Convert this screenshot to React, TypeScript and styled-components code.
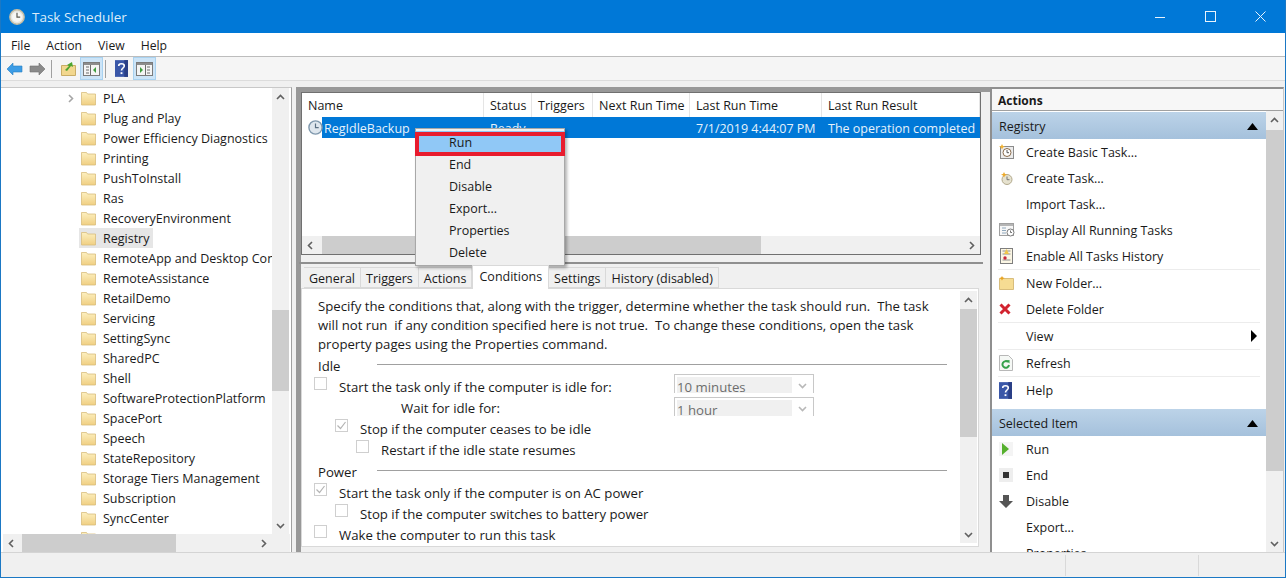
import * as React from 'react'
import styled, { createGlobalStyle } from 'styled-components'

const GlobalStyle = createGlobalStyle`
  html, body {
    margin: 0;
    padding: 0;
    height: 100%;
    overflow: hidden;
    background: #f0f0f0;
  }
  * { box-sizing: border-box; }
`

const Window = styled.div`
  position: relative;
  width: 1286px;
  height: 578px;
  display: flex;
  flex-direction: column;
  background: #f0f0f0;
  border-left: 1px solid #1b78c4;
  border-right: 1px solid #1b78c4;
  border-bottom: 1px solid #1b78c4;
  font-family: "Open Sans", "Noto Sans", sans-serif;
  font-size: 12.5px;
  color: #1a1a1a;
  overflow: hidden;
`

const TitleBar = styled.div`
  height: 33px;
  margin: 0 -1px;
  flex: none;
  background: #0078d7;
  display: flex;
  align-items: center;
  padding: 0 1px 0 9px;
  gap: 7px;
  color: #dcecf9;
  font-size: 13.5px;
`

const TitleText = styled.span`
  flex: 1;
`

const WindowButton = styled.div`
  width: 50px;
  height: 32px;
  margin-left: -7px;
  display: flex;
  align-items: center;
  justify-content: center;
`

const MenuBar = styled.div`
  height: 24px;
  flex: none;
  background: #fff;
  border-bottom: 1px solid #bdbdbd;
  display: flex;
  align-items: center;
  padding: 2px 0 0 10px;
  gap: 16px;
  font-size: 12.2px;
`

const Toolbar = styled.div`
  height: 24px;
  flex: none;
  background: #f5f5f5;
  border-bottom: 1px solid #dcdcdc;
  display: flex;
  align-items: center;
  padding-left: 2px;
`

const ToolButton = styled.div<{ $on?: boolean }>`
  width: 23px;
  height: 23px;
  display: flex;
  align-items: center;
  justify-content: center;
  background: ${p => (p.$on ? '#cce4f7' : 'transparent')};
  border: 1px solid ${p => (p.$on ? '#a9d2f0' : 'transparent')};
`

const ToolSeparator = styled.div`
  width: 1px;
  height: 18px;
  background: #a0a0a0;
  margin: 0 4.5px 0 2px;
`

const Main = styled.div`
  flex: 1;
  min-height: 0;
  display: flex;
  padding: 6px 2px 0 0;
`

const Pane = styled.div`
  display: flex;
  flex-direction: column;
  background: #fff;
  border: 1px solid #a0a0a0;
  overflow: hidden;
`

const TreePane = styled(Pane)`
  width: 291px;
  height: 466px;
  flex: none;
  padding-left: 2px;
  border-left: none;
  border-top: 1px solid #c8c8c8;
`

const ScrollRow = styled.div`
  flex: 1;
  min-height: 0;
  display: flex;
`

const TreeScrollRow = styled(ScrollRow)`
  padding-right: 2px;
`

const TreeList = styled.div`
  flex: 1;
  min-width: 0;
  overflow: hidden;
`

const TreeRow = styled.div`
  height: 20px;
  display: flex;
  align-items: center;
  white-space: nowrap;
  overflow: hidden;
  padding-left: 62px;
`

const TreeArrow = styled.div`
  width: 16px;
  flex: none;
  display: flex;
  align-items: center;
`

const FolderBox = styled.div<{ $selected?: boolean }>`
  height: 20px;
  display: flex;
  align-items: center;
  gap: 7px;
  padding-right: 4px;
  margin-left: -2px;
  padding-left: 2px;
  background: ${p => (p.$selected ? '#e6e6e6' : 'transparent')};
`

const ScrollFooter = styled.div`
  height: 18px;
  flex: none;
  display: flex;
  background: #f0f0f0;
`

const TreeFooter = styled(ScrollFooter)`
  margin-right: 1px;
`

const TreeCorner = styled.div`
  width: 18px;
  flex: none;
`

const Track = styled.div<{ $vertical?: boolean }>`
  flex: ${p => (p.$vertical ? 'none' : '1')};
  min-width: 0;
  display: flex;
  flex-direction: ${p => (p.$vertical ? 'column' : 'row')};
  background: #f0f0f0;
  ${p => (p.$vertical ? 'width: 17px;' : '')}
`

const TrackButton = styled.div`
  width: 17px;
  height: 18px;
  flex: none;
  display: flex;
  align-items: center;
  justify-content: center;
`

const TrackGap = styled.div<{ $size: number }>`
  flex: 0 0 ${p => p.$size}px;
`

const Thumb = styled.div<{ $size: number }>`
  flex: 0 0 ${p => p.$size}px;
  background: #cdcdcd;
`

const TrackFill = styled.div`
  flex: 1;
`

const CenterColumn = styled.div`
  width: 694px;
  margin-left: 4px;
  flex: none;
  height: 466px;
  display: flex;
  flex-direction: column;
  border-left: 5px solid #989898;
  border-top: 5px solid #989898;
`

const TaskPane = styled(Pane)`
  width: 680px;
  height: 163px;
  flex: none;
  border: 1px solid #707070;
`

const TaskHeader = styled.div`
  height: 24px;
  flex: none;
  display: flex;
  background: #fff;
`

const HeaderCell = styled.div<{ $width: number }>`
  width: ${p => p.$width}px;
  flex: none;
  display: flex;
  align-items: center;
  padding-left: 6px;
  border-right: 1px solid #e5e5e5;
  overflow: hidden;
  white-space: nowrap;
`

const TaskBody = styled.div`
  flex: 1;
  min-height: 0;
  overflow: hidden;
`

const TaskRow = styled.div`
  height: 21px;
  display: flex;
  background: #0078d7;
  color: #e6f2fb;
  margin-left: 20px;
`

const TaskCell = styled.div<{ $width: number; $pad?: number }>`
  width: ${p => p.$width}px;
  flex: none;
  display: flex;
  align-items: center;
  padding: 1px 0 0 ${p => p.$pad ?? 6}px;
  overflow: hidden;
  white-space: nowrap;
`

const TaskClock = styled.div`
  position: absolute;
  left: 307px;
  top: 120px;
  width: 15px;
  height: 15px;
`

const Splitter = styled.div`
  height: 9px;
  flex: none;
  margin-left: -2px;
  margin-right: 7px;
  border-bottom: 2px solid #8f8f8f;
`

const TabStrip = styled.div`
  height: 24px;
  flex: none;
  display: flex;
  align-items: flex-end;
  padding-left: 3px;
`

const Tab = styled.div<{ $active?: boolean }>`
  height: ${p => (p.$active ? 24 : 21)}px;
  padding: ${p => (p.$active ? '0 6px 2px' : '1px 5px 0')};
  margin-bottom: ${p => (p.$active ? -1 : 0)}px;
  display: flex;
  align-items: center;
  background: ${p => (p.$active ? '#fff' : '#f0f0f0')};
  border: 1px solid #d9d9d9;
  border-bottom: ${p => (p.$active ? 'none' : '1px solid #d9d9d9')};
  border-left: ${p => (p.$active ? '1px solid #d9d9d9' : 'none')};
  position: relative;
  z-index: ${p => (p.$active ? 1 : 0)};
`

const ConditionsPane = styled.div`
  width: 678px;
  flex: 1;
  min-height: 0;
  display: flex;
  background: #fff;
  border: 1px solid #d9d9d9;
  padding: 2px 1px 3px 0;
  margin-bottom: 6px;
  font-size: 13.2px;
`

const ConditionsBody = styled.div`
  flex: 1;
  min-width: 0;
  overflow: hidden;
  padding: 6px 0 0 16px;
`

const Intro = styled.p`
  margin: 0 0 1px;
  line-height: 19px;
  white-space: pre;
`

const GroupHeading = styled.div`
  height: 21px;
  display: flex;
  align-items: center;
  margin-top: 1px;
  width: 629px;
`

const GroupLabel = styled.span`
  width: 59px;
  flex: none;
`

const GroupRule = styled.div`
  flex: 1;
  height: 1px;
  margin-top: -2px;
  background: #a0a0a0;
`

const OptionRow = styled.div<{ $indent: number }>`
  height: 21px;
  display: flex;
  align-items: center;
  padding-left: ${p => p.$indent}px;
  margin-left: -4px;
  gap: 12px;
  white-space: nowrap;
`

const Checkbox = styled.div`
  width: 13px;
  height: 13px;
  flex: none;
  margin-top: -6px;
  border: 1px solid #cfcfcf;
  display: flex;
  align-items: center;
  justify-content: center;
`

const OptionLabel = styled.span<{ $width?: number }>`
  ${p => (p.$width ? `width: ${p.$width}px; flex: none;` : '')}
`

const Combo = styled.div<{ $lift: number }>`
  width: 140px;
  height: 19px;
  flex: none;
  align-self: flex-start;
  margin-top: ${p => -p.$lift}px;
  border: 1px solid #c8c8c8;
  border-bottom: none;
  display: flex;
  padding: 2px 0 0 2px;
  color: #6d6d6d;
`

const ComboValue = styled.div`
  width: 115px;
  background: #f0f0f0;
  display: flex;
  align-items: center;
  padding-top: 3px;
  overflow: hidden;
`

const ComboArrow = styled.div`
  flex: 1;
  display: flex;
  align-items: center;
  justify-content: center;
`

const ActionsColumn = styled(Pane)`
  width: 294px;
  flex: none;
  height: 466px;
  border-color: #8f8f8f;
  border-width: 2px 0 1px 2px;
  border-right: 1px solid #c8c8c8;
`

const ActionsTitle = styled.div`
  height: 22px;
  flex: none;
  background: #f7f7f7;
  border-bottom: 1px solid #a0a0a0;
  display: flex;
  align-items: center;
  padding: 2px 0 0 6px;
  font-weight: 700;
  font-size: 12px;
`

const ActionsList = styled.div`
  flex: 1;
  min-width: 0;
  overflow: hidden;
  padding-top: 1px;
`

const SectionHead = styled.div`
  height: 27px;
  background: linear-gradient(#bcd3e8, #a5c1dc);
  display: flex;
  align-items: center;
  justify-content: space-between;
  padding: 1px 8px 0 7px;
`

const ActionRow = styled.div`
  height: 26px;
  display: flex;
  align-items: center;
  position: relative;
`

const ActionIcon = styled.div`
  width: 34px;
  flex: none;
  padding-left: 7px;
  display: flex;
  align-items: center;
`

const ActionRule = styled.div`
  height: 1px;
  margin: 0 6px;
  background: #ececec;
`

const ActionGap = styled.div`
  height: 6px;
`

const SubArrow = styled.div`
  position: absolute;
  right: 9px;
  top: 7px;
  width: 0;
  height: 0;
  border-left: 6px solid #000;
  border-top: 6px solid transparent;
  border-bottom: 6px solid transparent;
`

const StatusBar = styled.div`
  height: 25px;
  flex: none;
  display: flex;
  justify-content: flex-end;
  border-top: 1px solid #d4d4d4;
  padding: 2px 2px 1px 0;
`

const StatusCell = styled.div<{ $width: number }>`
  width: ${p => p.$width}px;
  border-left: 1px solid #d9d9d9;
`

const ContextMenu = styled.div`
  position: absolute;
  left: 414px;
  top: 128px;
  width: 150px;
  height: 138px;
  background: #f0f0f0;
  border: 1px solid #a8a8a8;
  box-shadow: 2px 2px 3px rgba(0, 0, 0, 0.3);
  padding: 2px 0;
`

const ContextItem = styled.div<{ $active?: boolean }>`
  height: 22px;
  display: flex;
  align-items: center;
  padding-left: 33px;
  background: ${p => (p.$active ? '#90c8f6' : 'transparent')};
`

const RunHighlight = styled.div`
  position: absolute;
  left: 414px;
  top: 132px;
  width: 150px;
  height: 24px;
  border: 4px solid #e81c2e;
`

const Chevron: React.FC<{ dir: 'up' | 'down' | 'left' | 'right'; color?: string }> = ({ dir, color = '#606060' }) => {
  const points = {
    up: '2,7 5.5,3.5 9,7',
    down: '2,4 5.5,7.5 9,4',
    left: '7,2 3.5,5.5 7,9',
    right: '4,2 7.5,5.5 4,9',
  }[dir]
  return (
    <svg width="11" height="11" viewBox="0 0 11 11">
      <polyline points={points} fill="none" stroke={color} strokeWidth="1.6" />
    </svg>
  )
}

const FolderIcon: React.FC = () => (
  <svg width="15" height="15" viewBox="0 0 15 15">
    <defs>
      <linearGradient id="fold" x1="0" y1="0" x2="0" y2="1">
        <stop offset="0" stopColor="#fdf0c0" />
        <stop offset="1" stopColor="#f0cf82" />
      </linearGradient>
    </defs>
    <path d="M0.5 1.5h5l1 1.5h8v11h-14z" fill="url(#fold)" stroke="#d8bd7c" strokeWidth="0.8" />
  </svg>
)

const ClockIcon: React.FC<{ size?: number }> = ({ size = 15 }) => (
  <svg width={size} height={size} viewBox="0 0 15 15">
    <circle cx="7.5" cy="7.5" r="6.6" fill="#dfe7ee" stroke="#7f98ad" strokeWidth="1.4" />
    <path d="M7.5 3.5v4.2h3.2" fill="none" stroke="#5b7184" strokeWidth="1.2" />
  </svg>
)

const AppClockIcon: React.FC = () => (
  <svg width="16" height="16" viewBox="0 0 16 16">
    <circle cx="8" cy="8" r="7.2" fill="#e6e6e0" stroke="#c6bda2" strokeWidth="1.4" />
    <circle cx="8" cy="8" r="5" fill="#f7f7f4" />
    <path d="M8 3.8v4.4h3.2" fill="none" stroke="#5a5a52" strokeWidth="1.2" />
  </svg>
)

const PanelIcon: React.FC<{ flip?: boolean }> = ({ flip }) => (
  <svg width="17" height="14" viewBox="0 0 17 14">
    <rect x="0.5" y="0.5" width="16" height="13" fill="#f4f4f4" stroke="#7b7b7b" />
    <rect x="1" y="1" width="15" height="2" fill="#8c8c8c" />
    <path d={flip ? 'M11 5h3M11 8h3M11 11h3M9.5 3v10' : 'M3 5h3M3 8h3M3 11h3M7.5 3v10'} stroke="#6d6d6d" />
    <path d={flip ? 'M4 5l3 3-3 3z' : 'M13 5l-3 3 3 3z'} fill="#3e9d3e" />
  </svg>
)

const HelpIcon: React.FC<{ size?: number }> = ({ size = 14 }) => (
  <svg width={size} height={size + 4} viewBox="0 0 14 18">
    <rect width="14" height="18" fill="#3a57a8" />
    <rect x="10" width="4" height="18" fill="#2a3f86" />
    <path d="M4 6.2C4 3.2 10 3.2 10 6.2c0 2.2-3 2.4-3 5" fill="none" stroke="#fff" strokeWidth="1.7" />
    <rect x="6" y="13" width="2" height="2" fill="#fff" />
  </svg>
)

const ACTION_ICONS: Record<string, React.ReactNode> = {
  basic: (
    <svg width="16" height="16" viewBox="0 0 16 16">
      <rect x="1.5" y="2.5" width="13" height="12" fill="#ececec" stroke="#8b8b8b" />
      <circle cx="8" cy="8.5" r="4" fill="#fff" stroke="#8a6b4a" />
      <path d="M8 6v2.7h2" fill="none" stroke="#555" />
      <path d="M3 0l1 2 2 .5-2 1-1 2-1-2-2-1 2-.5z" fill="#f2b233" />
    </svg>
  ),
  create: (
    <svg width="16" height="16" viewBox="0 0 16 16">
      <circle cx="8" cy="9.5" r="5" fill="#e6e2cf" stroke="#b2a98c" />
      <path d="M8 6.5v3.2h2.5" fill="none" stroke="#777" />
      <path d="M5 2l1 2 2 .5-2 1-1 2-1-2-2-1 2-.5z" fill="#eda92a" />
    </svg>
  ),
  running: (
    <svg width="16" height="14" viewBox="0 0 16 14">
      <rect x="0.5" y="0.5" width="14" height="12" fill="#f7f7f7" stroke="#a0a0a0" />
      <rect x="1" y="1" width="13" height="2" fill="#b5b5b5" />
      <path d="M3 5h4M3 7.5h4M3 10h4" stroke="#90a8bc" />
      <circle cx="11.5" cy="9.5" r="3.5" fill="#fff" stroke="#7c7c7c" />
      <path d="M11.5 7.5v2h1.5" fill="none" stroke="#555" strokeWidth="0.8" />
    </svg>
  ),
  history: (
    <svg width="15" height="16" viewBox="0 0 15 16">
      <rect x="1.5" y="0.5" width="12" height="15" fill="#fbf6e4" stroke="#7e7e7e" />
      <path d="M3.5 3h8M3.5 6h8M3.5 12h8" stroke="#909090" />
      <path d="M7.5 1l2.5 5h-5z" fill="#f0c64a" />
      <circle cx="6" cy="10" r="1.7" fill="#c8283c" />
    </svg>
  ),
  folder: (
    <svg width="15" height="14" viewBox="0 0 15 14">
      <path d="M0.5 2.5h14v11h-14z" fill="#f6dc93" stroke="#d8bd7c" />
      <path d="M3 0l.9 1.6 1.8.4-1.8.9-.9 1.6-.9-1.6L.3 2l1.8-.4z" fill="#e9a21f" />
    </svg>
  ),
  del: (
    <svg width="12" height="12" viewBox="0 0 12 12">
      <path d="M1.5 1.5l9 9M10.5 1.5l-9 9" stroke="#d2232f" strokeWidth="3" />
    </svg>
  ),
  refresh: (
    <svg width="14" height="16" viewBox="0 0 14 16">
      <path d="M0.5 0.5h9l4 4v11h-13z" fill="#f5f8f5" stroke="#b8b8b8" />
      <path d="M10 10a3.3 3.3 0 1 1-1-3" fill="none" stroke="#35a24b" strokeWidth="2" />
      <path d="M7 5.5l3.5-.5v3.5z" fill="#35a24b" />
    </svg>
  ),
  help: <HelpIcon size={13} />,
  run: (
    <svg width="14" height="14" viewBox="0 0 14 14">
      <rect width="14" height="14" fill="#f4f4f4" />
      <path d="M3 1l7 6-7 6z" fill="#56b02e" />
    </svg>
  ),
  end: (
    <svg width="14" height="14" viewBox="0 0 14 14">
      <rect width="14" height="14" fill="#eeeeee" />
      <rect x="4" y="4" width="6" height="6" fill="#333" />
    </svg>
  ),
  disable: (
    <svg width="14" height="14" viewBox="0 0 14 14">
      <path d="M4 1h6v6h4l-7 7-7-7h4z" fill="#555" />
    </svg>
  ),
}

const TREE = [
  'PLA', 'Plug and Play', 'Power Efficiency Diagnostics', 'Printing', 'PushToInstall', 'Ras',
  'RecoveryEnvironment', 'Registry', 'RemoteApp and Desktop Connections', 'RemoteAssistance',
  'RetailDemo', 'Servicing', 'SettingSync', 'SharedPC', 'Shell', 'SoftwareProtectionPlatform',
  'SpacePort', 'Speech', 'StateRepository', 'Storage Tiers Management', 'Subscription', 'SyncCenter',
  'Sysmain',
]

const COLUMNS: [string, number][] = [
  ['Name', 182], ['Status', 48], ['Triggers', 61], ['Next Run Time', 97],
  ['Last Run Time', 132], ['Last Run Result', 158],
]

const TABS = ['General', 'Triggers', 'Actions', 'Conditions', 'Settings', 'History (disabled)']

const INTRO = `Specify the conditions that, along with the trigger, determine whether the task should run.  The task
will not run  if any condition specified here is not true.  To change these conditions, open the task
property pages using the Properties command.`

type Action = { label: string; icon?: string; rule?: boolean; arrow?: boolean }

const REGISTRY_ACTIONS: Action[] = [
  { label: 'Create Basic Task...', icon: 'basic' },
  { label: 'Create Task...', icon: 'create' },
  { label: 'Import Task...' },
  { label: 'Display All Running Tasks', icon: 'running' },
  { label: 'Enable All Tasks History', icon: 'history', rule: true },
  { label: 'New Folder...', icon: 'folder' },
  { label: 'Delete Folder', icon: 'del', rule: true },
  { label: 'View', arrow: true, rule: true },
  { label: 'Refresh', icon: 'refresh', rule: true },
  { label: 'Help', icon: 'help' },
]

const ITEM_ACTIONS: Action[] = [
  { label: 'Run', icon: 'run' },
  { label: 'End', icon: 'end' },
  { label: 'Disable', icon: 'disable' },
  { label: 'Export...' },
  { label: 'Properties' },
]

const VerticalScrollbar: React.FC<{ before: number; size: number }> = ({ before, size }) => (
  <Track $vertical>
    <TrackButton><Chevron dir="up" /></TrackButton>
    <TrackGap $size={before} />
    <Thumb $size={size} />
    <TrackFill />
    <TrackButton><Chevron dir="down" /></TrackButton>
  </Track>
)

const HorizontalScrollbar: React.FC<{ before: number; size: number }> = ({ before, size }) => (
  <Track>
    <TrackButton><Chevron dir="left" /></TrackButton>
    <TrackGap $size={before} />
    <Thumb $size={size} />
    <TrackFill />
    <TrackButton><Chevron dir="right" /></TrackButton>
  </Track>
)

const Check: React.FC<{ on?: boolean }> = ({ on }) => (
  <Checkbox>
    {on && (
      <svg width="11" height="11" viewBox="0 0 11 11">
        <path d="M1.5 5.5l3 3 5-6.5" fill="none" stroke="#b4b4b4" strokeWidth="1.2" />
      </svg>
    )}
  </Checkbox>
)

const ActionLines: React.FC<{ items: Action[] }> = ({ items }) => (
  <>
    {items.map(item => (
      <React.Fragment key={item.label}>
        <ActionRow>
          <ActionIcon>{item.icon && ACTION_ICONS[item.icon]}</ActionIcon>
          {item.label}
          {item.arrow && <SubArrow />}
        </ActionRow>
        {item.rule && <ActionRule />}
      </React.Fragment>
    ))}
  </>
)

const SectionArrow: React.FC = () => (
  <svg width="11" height="7" viewBox="0 0 11 7">
    <path d="M0 7l5.5-7L11 7z" fill="#000" />
  </svg>
)

const App: React.FC = () => (
  <Window>
    <GlobalStyle />
    <TitleBar>
      <AppClockIcon />
      <TitleText>Task Scheduler</TitleText>
      <WindowButton>
        <svg width="11" height="11" viewBox="0 0 11 11"><path d="M0 6.5h10" stroke="#e8f3fc" /></svg>
      </WindowButton>
      <WindowButton>
        <svg width="11" height="11" viewBox="0 0 11 11"><rect x="0.5" y="0.5" width="10" height="10" fill="none" stroke="#e8f3fc" /></svg>
      </WindowButton>
      <WindowButton>
        <svg width="11" height="11" viewBox="0 0 11 11"><path d="M0.5 0.5l10 10M10.5 0.5l-10 10" stroke="#e8f3fc" /></svg>
      </WindowButton>
    </TitleBar>
    <MenuBar>
      <span>File</span>
      <span>Action</span>
      <span>View</span>
      <span>Help</span>
    </MenuBar>
    <Toolbar>
      <ToolButton>
        <svg width="17" height="14" viewBox="0 0 17 14"><path d="M1 7l6-6v3h9v6H7v3z" fill="#3b9ce6" stroke="#2a7fc0" strokeWidth="0.6" /></svg>
      </ToolButton>
      <ToolButton>
        <svg width="17" height="14" viewBox="0 0 17 14"><path d="M16 7l-6-6v3H1v6h9v3z" fill="#8a8a8a" stroke="#6f6f6f" strokeWidth="0.6" /></svg>
      </ToolButton>
      <ToolSeparator />
      <ToolButton>
        <svg width="15" height="15" viewBox="0 0 15 15">
          <path d="M0.5 4.5h14v10h-14z" fill="#f2d78e" stroke="#c9ad66" />
          <path d="M4 9l4-4-2-1 5-3 1 5-2-1-4 5z" fill="#4da52f" />
        </svg>
      </ToolButton>
      <ToolButton $on><PanelIcon /></ToolButton>
      <ToolSeparator />
      <ToolButton><HelpIcon size={13} /></ToolButton>
      <ToolButton $on><PanelIcon flip /></ToolButton>
    </Toolbar>
    <Main>
      <TreePane>
        <TreeScrollRow>
          <TreeList>
            {TREE.map((name, i) => (
              <TreeRow key={name}>
                <TreeArrow>{i === 0 && <Chevron dir="right" color="#a6a6a6" />}</TreeArrow>
                <FolderBox $selected={name === 'Registry'}>
                  <FolderIcon />
                  {name}
                </FolderBox>
              </TreeRow>
            ))}
          </TreeList>
          <VerticalScrollbar before={204} size={81} />
        </TreeScrollRow>
        <TreeFooter>
          <HorizontalScrollbar before={2} size={154} />
          <TreeCorner />
        </TreeFooter>
      </TreePane>
      <CenterColumn>
        <TaskPane>
          <TaskHeader>
            {COLUMNS.map(([label, width]) => (
              <HeaderCell key={label} $width={width}>{label}</HeaderCell>
            ))}
          </TaskHeader>
          <TaskBody>
            <TaskRow>
              <TaskCell $width={162} $pad={2}>RegIdleBackup</TaskCell>
              <TaskCell $width={48}>Ready</TaskCell>
              <TaskCell $width={61} />
              <TaskCell $width={97} />
              <TaskCell $width={132}>7/1/2019 4:44:07 PM</TaskCell>
              <TaskCell $width={158}>The operation completed</TaskCell>
            </TaskRow>
          </TaskBody>
          <ScrollFooter>
            <HorizontalScrollbar before={3} size={439} />
          </ScrollFooter>
        </TaskPane>
        <Splitter />
        <TabStrip>
          {TABS.map(tab => (
            <Tab key={tab} $active={tab === 'Conditions'}>{tab}</Tab>
          ))}
        </TabStrip>
        <ConditionsPane>
          <ConditionsBody>
            <Intro>{INTRO}</Intro>
            <GroupHeading>
              <GroupLabel>Idle</GroupLabel>
              <GroupRule />
            </GroupHeading>
            <OptionRow $indent={0}>
              <Check />
              <OptionLabel $width={323}>Start the task only if the computer is idle for:</OptionLabel>
              <Combo $lift={2}>
                <ComboValue>10 minutes</ComboValue>
                <ComboArrow><Chevron dir="down" color="#b8b8b8" /></ComboArrow>
              </Combo>
            </OptionRow>
            <OptionRow $indent={87}>
              <OptionLabel $width={261}>Wait for idle for:</OptionLabel>
              <Combo $lift={0}>
                <ComboValue>1 hour</ComboValue>
                <ComboArrow><Chevron dir="down" color="#b8b8b8" /></ComboArrow>
              </Combo>
            </OptionRow>
            <OptionRow $indent={21}><Check on />Stop if the computer ceases to be idle</OptionRow>
            <OptionRow $indent={42}><Check />Restart if the idle state resumes</OptionRow>
            <GroupHeading>
              <GroupLabel>Power</GroupLabel>
              <GroupRule />
            </GroupHeading>
            <OptionRow $indent={0}><Check on />Start the task only if the computer is on AC power</OptionRow>
            <OptionRow $indent={21}><Check />Stop if the computer switches to battery power</OptionRow>
            <OptionRow $indent={0}><Check />Wake the computer to run this task</OptionRow>
          </ConditionsBody>
          <VerticalScrollbar before={0} size={128} />
        </ConditionsPane>
      </CenterColumn>
      <ActionsColumn>
        <ActionsTitle>Actions</ActionsTitle>
        <ScrollRow>
          <ActionsList>
            <SectionHead>Registry<SectionArrow /></SectionHead>
            <ActionLines items={REGISTRY_ACTIONS} />
            <ActionGap />
            <SectionHead>Selected Item<SectionArrow /></SectionHead>
            <ActionLines items={ITEM_ACTIONS} />
          </ActionsList>
          <VerticalScrollbar before={1} size={341} />
        </ScrollRow>
      </ActionsColumn>
    </Main>
    <StatusBar>
      <StatusCell $width={133} />
      <StatusCell $width={85} />
    </StatusBar>
    <TaskClock><ClockIcon /></TaskClock>
    <ContextMenu>
      {['Run', 'End', 'Disable', 'Export...', 'Properties', 'Delete'].map(item => (
        <ContextItem key={item} $active={item === 'Run'}>{item}</ContextItem>
      ))}
    </ContextMenu>
    <RunHighlight />
  </Window>
)

export default App
